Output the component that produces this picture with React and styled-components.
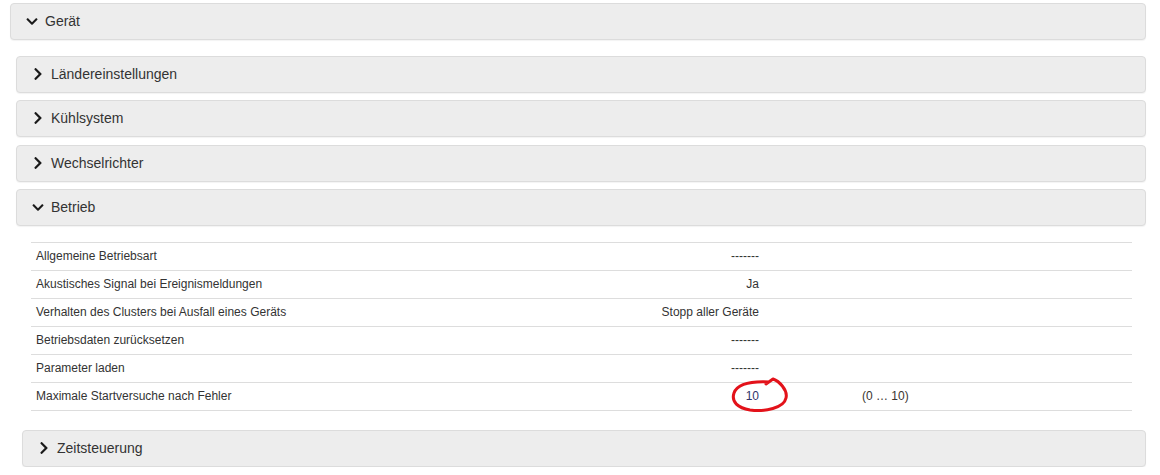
import styled, { createGlobalStyle } from "styled-components";
import { FaChevronDown, FaChevronRight } from "react-icons/fa";

const GlobalStyle = createGlobalStyle`
  body {
    margin: 0;
    background: #fff;
    font-family: "Liberation Sans", Arial, sans-serif;
    color: #333;
  }
`;

const Page = styled.div`
  padding: 3px 14px 0 10px;
`;

const Heading = styled.div`
  display: flex;
  align-items: center;
  box-sizing: border-box;
  height: 37px;
  padding: 0 15px 1px;
  margin-bottom: ${(p) => p.$mb || 0}px;
  background: #ededed;
  border: 1px solid #dcdcdc;
  border-radius: 4px;
  box-shadow: 0 1px 1px rgba(0, 0, 0, 0.05);
  font-size: 14px;
  color: #333;
`;

const Caret = styled.span`
  display: flex;
  justify-content: center;
  width: 12px;
  margin-right: 7px;
  color: #1a1a1a;
`;

const Group = styled.div`
  padding-left: 6px;
`;

const Body = styled.div`
  padding: 15px 14px 0 15px;
`;

const Table = styled.div`
  margin-top: 1px;
  border-bottom: 1px solid #ddd;
`;

const Row = styled.div`
  display: grid;
  grid-template-columns: 600px 133px 1fr;
  box-sizing: border-box;
  height: 28px;
  padding-bottom: 1px;
  align-items: center;
  border-top: 1px solid #ddd;
  font-size: 12px;
`;

const Label = styled.div`
  padding-left: 5px;
`;

const Value = styled.div`
  position: relative;
  text-align: right;
  padding-right: 5px;
  color: ${(p) => (p.$mark ? "#30346a" : "#333")};
`;

const Range = styled.div`
  padding-left: 98px;
  color: #3a3530;
`;

const Mark = styled.svg`
  position: absolute;
  left: 95px;
  top: -15px;
  width: 70px;
  height: 42px;
  overflow: visible;
`;

const Closed = styled.div`
  margin-left: ${(p) => p.$ml || 0}px;
  margin-top: ${(p) => p.$mt || 0}px;
`;

function Panel({ title, open, mb }) {
  return (
    <Heading $mb={mb}>
      <Caret>{open ? <FaChevronDown size={13} /> : <FaChevronRight size={14} />}</Caret>
      {title}
    </Heading>
  );
}

const rows = [
  ["Allgemeine Betriebsart", "-------"],
  ["Akustisches Signal bei Ereignismeldungen", "Ja"],
  ["Verhalten des Clusters bei Ausfall eines Geräts", "Stopp aller Geräte"],
  ["Betriebsdaten zurücksetzen", "-------"],
  ["Parameter laden", "-------"],
  ["Maximale Startversuche nach Fehler", "10", "(0 … 10)"],
];

export default function App() {
  return (
    <>
      <GlobalStyle />
      <Page>
        <Panel title="Gerät" open mb={16} />
        <Group>
          <Panel title="Ländereinstellungen" mb={7} />
          <Panel title="Kühlsystem" mb={8} />
          <Panel title="Wechselrichter" mb={7} />
          <Panel title="Betrieb" open />
          <Body>
            <Table>
              {rows.map(([label, value, range]) => (
                <Row key={label}>
                  <Label>{label}</Label>
                  <Value $mark={!!range}>
                    {value}
                    {range && (
                      <Mark viewBox="0 0 70 42">
                        <path
                          d="M40 10 L47 5 C53 7 62 16 60 24 C58 34 39 38 24 36 C12 34 5 28 8 19 C11 11 22 7 43 8"
                          fill="none"
                          stroke="#e3121a"
                          strokeWidth="3"
                          strokeLinecap="round"
                          strokeLinejoin="round"
                        />
                      </Mark>
                    )}
                  </Value>
                  <Range>{range}</Range>
                </Row>
              ))}
            </Table>
          </Body>
          <Closed $ml={6} $mt={19}>
            <Panel title="Zeitsteuerung" />
          </Closed>
        </Group>
      </Page>
    </>
  );
}
